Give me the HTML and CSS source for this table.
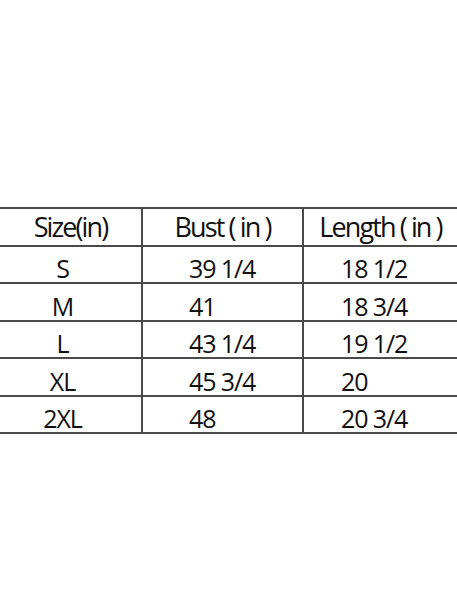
FILE: index.html
```html
<!DOCTYPE html>
<html lang="en">
<head>
<meta charset="utf-8">
<title>Size chart</title>
<link rel="stylesheet" href="styles.css">
</head>
<body>
<table class="chart">
  <colgroup>
    <col class="c1">
    <col class="c2">
    <col class="c3">
  </colgroup>
  <thead>
    <tr>
      <th>Size(in)</th>
      <th>Bust ( in )</th>
      <th>Length ( in )</th>
    </tr>
  </thead>
  <tbody>
    <tr><td class="size">S</td><td class="bust">39 1/4</td><td class="len">18 1/2</td></tr>
    <tr><td class="size">M</td><td class="bust">41</td><td class="len">18 3/4</td></tr>
    <tr><td class="size">L</td><td class="bust">43 1/4</td><td class="len">19 1/2</td></tr>
    <tr><td class="size">XL</td><td class="bust">45 3/4</td><td class="len">20</td></tr>
    <tr><td class="size">2XL</td><td class="bust">48</td><td class="len">20 3/4</td></tr>
  </tbody>
</table>
</body>
</html>
```
FILE: styles.css
```css
html, body {
  margin: 0;
  padding: 0;
  background: #fff;
}

body {
  font-family: "Open Sans", "Noto Sans", sans-serif;
  color: #111;
}

.chart {
  margin-top: 207px;
  width: 457px;
  border-collapse: collapse;
  table-layout: fixed;
  border-top: 2px solid #4a4a4a;
}

.c1 { width: 142px; }
.c2 { width: 161px; }
.c3 { width: 154px; }

.chart th,
.chart td {
  height: 35.5px;
  padding: 0;
  border-bottom: 2px solid #4a4a4a;
  border-left: 2px solid #4a4a4a;
  vertical-align: middle;
  box-sizing: content-box;
}

.chart th:first-child,
.chart td:first-child {
  border-left: none;
}

.chart th {
  font-weight: 400;
  font-size: 27px;
  line-height: 27px;
  letter-spacing: -1.9px;
  text-align: center;
}

.chart td {
  font-size: 25px;
  line-height: 25px;
  letter-spacing: -1.1px;
  padding-top: 9px;
  height: 26.5px;
}

.chart td.size {
  text-align: center;
  padding-right: 16px;
}

.chart td.bust {
  text-align: left;
  padding-left: 46px;
}

.chart td.len {
  text-align: left;
  padding-left: 37px;
}
```
